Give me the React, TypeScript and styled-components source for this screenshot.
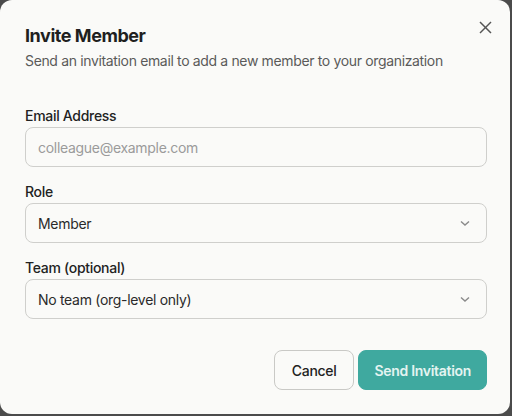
import React from "react";
import styled, { createGlobalStyle } from "styled-components";

const GlobalStyle = createGlobalStyle`
  html, body {
    margin: 0;
    padding: 0;
    background: #4b4b4b;
  }
  body {
    font-family: Inter, "Noto Sans", sans-serif;
    -webkit-font-smoothing: antialiased;
  }
`;

const Dialog = styled.div`
  box-sizing: border-box;
  width: 510px;
  height: 414px;
  background: #fafaf8;
  border-radius: 12px;
  padding: 24px 23px 24px 25px;
  display: flex;
  flex-direction: column;
  position: relative;
`;

const CloseButton = styled.button`
  position: absolute;
  top: 18px;
  right: 16px;
  width: 18px;
  height: 18px;
  padding: 0;
  border: 0;
  background: none;
  display: flex;
  align-items: center;
  justify-content: center;
  cursor: pointer;
`;

const Header = styled.div`
  display: flex;
  flex-direction: column;
  gap: 3px;
  margin-bottom: 35px;
`;

const Title = styled.h2`
  margin: 0;
  font-size: 18px;
  line-height: 24px;
  font-weight: 700;
  letter-spacing: -0.45px;
  color: #1f1f1f;
`;

const Subtitle = styled.p`
  margin: 0;
  font-size: 14px;
  line-height: 20px;
  letter-spacing: -0.35px;
  color: #5a5a5a;
`;

const Form = styled.div`
  display: flex;
  flex-direction: column;
  gap: 15px;
`;

const Field = styled.div`
  display: flex;
  flex-direction: column;
  gap: 1px;
`;

const Label = styled.label`
  font-size: 14px;
  line-height: 20px;
  font-weight: 500;
  letter-spacing: -0.3px;
  color: #222;
`;

const Control = styled.div<{ $muted?: boolean }>`
  box-sizing: border-box;
  height: 40px;
  border: 1px solid #cfcfcc;
  border-radius: 8px;
  background: #fafaf8;
  padding: 0 15px 0 12px;
  display: flex;
  align-items: center;
  justify-content: space-between;
  font-size: 14px;
  letter-spacing: -0.3px;
  color: ${(p) => (p.$muted ? "#9b9b9b" : "#2a2a2a")};
`;

const Chevron = styled.svg`
  width: 12px;
  height: 12px;
  stroke: #8a8a8a;
  fill: none;
  stroke-width: 1.4;
`;

const Footer = styled.div`
  margin-top: auto;
  display: flex;
  justify-content: flex-end;
  gap: 4px;
`;

const Button = styled.button<{ $primary?: boolean }>`
  box-sizing: border-box;
  height: 40px;
  padding: 0 ${(p) => (p.$primary ? "15px" : "17px")};
  border-radius: 8px;
  font-family: inherit;
  font-size: 14px;
  letter-spacing: -0.3px;
  border: 1px solid ${(p) => (p.$primary ? "#3fa99f" : "#c9c9c6")};
  background: ${(p) => (p.$primary ? "#3fa99f" : "#fafaf8")};
  color: ${(p) => (p.$primary ? "#e4f4f1" : "#222")};
  font-weight: ${(p) => (p.$primary ? 600 : 500)};
`;

const SelectBox = ({ value }: { value: string }) => (
  <Control>
    <span>{value}</span>
    <Chevron viewBox="0 0 12 12">
      <polyline points="2 4.5 6 8 10 4.5" />
    </Chevron>
  </Control>
);

export default function App() {
  return (
    <>
      <GlobalStyle />
      <Dialog>
        <CloseButton aria-label="Close">
          <svg width="13" height="13" viewBox="0 0 13 13" stroke="#555" strokeWidth="1.5" fill="none">
            <line x1="1" y1="1" x2="12" y2="12" />
            <line x1="12" y1="1" x2="1" y2="12" />
          </svg>
        </CloseButton>
        <Header>
          <Title>Invite Member</Title>
          <Subtitle>Send an invitation email to add a new member to your organization</Subtitle>
        </Header>
        <Form>
          <Field>
            <Label>Email Address</Label>
            <Control $muted>colleague@example.com</Control>
          </Field>
          <Field>
            <Label>Role</Label>
            <SelectBox value="Member" />
          </Field>
          <Field>
            <Label>Team (optional)</Label>
            <SelectBox value="No team (org-level only)" />
          </Field>
        </Form>
        <Footer>
          <Button>Cancel</Button>
          <Button $primary>Send Invitation</Button>
        </Footer>
      </Dialog>
    </>
  );
}
